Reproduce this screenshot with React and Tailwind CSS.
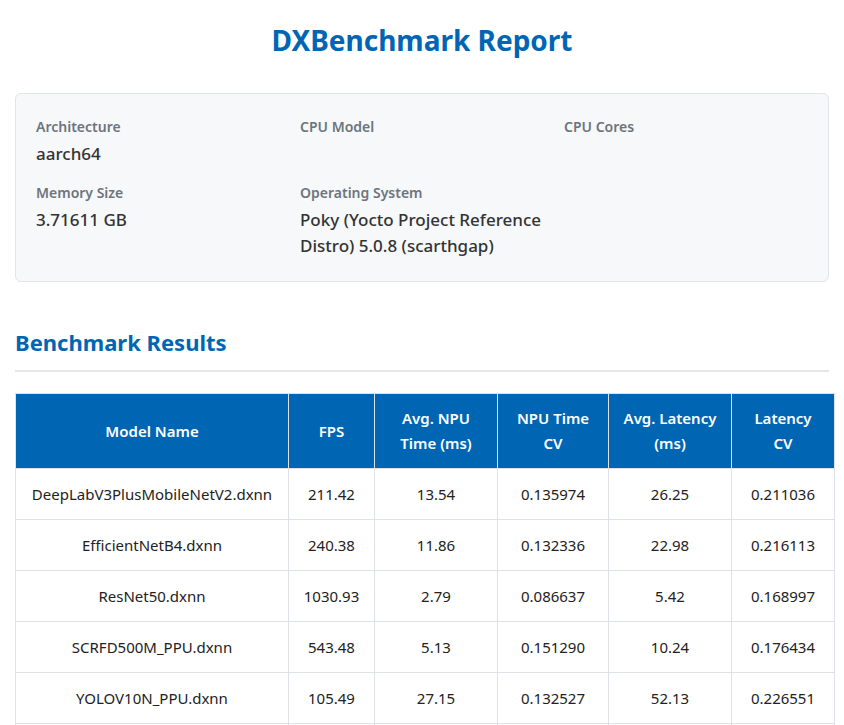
import React from 'react';

const info = [
  { label: 'Architecture', value: 'aarch64' },
  { label: 'CPU Model', value: '' },
  { label: 'CPU Cores', value: '' },
  { label: 'Memory Size', value: '3.71611 GB' },
  { label: 'Operating System', value: 'Poky (Yocto Project Reference Distro) 5.0.8 (scarthgap)' },
];

const headers = [
  ['Model Name', 'w-[273px]'],
  ['FPS', 'w-[86px]'],
  ['Avg. NPU Time (ms)', 'w-[123px]'],
  ['NPU Time CV', 'w-[111px]'],
  ['Avg. Latency (ms)', 'w-[123px]'],
  ['Latency CV', 'w-[103px]'],
];

const rows = [
  ['DeepLabV3PlusMobileNetV2.dxnn', '211.42', '13.54', '0.135974', '26.25', '0.211036'],
  ['EfficientNetB4.dxnn', '240.38', '11.86', '0.132336', '22.98', '0.216113'],
  ['ResNet50.dxnn', '1030.93', '2.79', '0.086637', '5.42', '0.168997'],
  ['SCRFD500M_PPU.dxnn', '543.48', '5.13', '0.151290', '10.24', '0.176434'],
  ['YOLOV10N_PPU.dxnn', '105.49', '27.15', '0.132527', '52.13', '0.226551'],
  ['YOLOV5S_PPU.dxnn', '310.22', '9.41', '0.128440', '18.77', '0.201376'],
];

export default function App() {
  return (
    <div className="h-screen overflow-hidden bg-white px-[15px] font-['Noto_Sans',sans-serif] text-[#333]">
      <h1 className="pt-[18px] text-center text-[28px] font-bold leading-[44px] text-[#0066b3]">DXBenchmark Report</h1>

      <div className="mt-[31px] grid grid-cols-3 gap-x-[20px] gap-y-[16px] rounded-md border border-[#e2e5e9] bg-[#f7f8fa] px-[20px] pt-[23px] pb-[22px]">
        {info.map((i) => (
          <div key={i.label}>
            <div className="text-[14px] font-semibold leading-[20px] text-[#6c757d]">{i.label}</div>
            <div className="mt-[4px] min-h-[26px] text-[17px] font-medium leading-[26px] text-[#333]">{i.value}</div>
          </div>
        ))}
      </div>

      <h2 className="mt-[44px] border-b-2 border-[#e5e7eb] pb-[12px] text-[22px] font-bold leading-[32px] text-[#0066b3]">Benchmark Results</h2>

      <table className="mt-[21px] w-full table-fixed border-collapse text-[15px]">
        <thead>
          <tr>
            {headers.map(([h, w]) => (
              <th key={h} className={`${w} h-[75px] border border-[#dee2e6] bg-[#0066b3] px-3 text-center text-[15px] font-semibold leading-[25px] text-white`}>{h}</th>
            ))}
          </tr>
        </thead>
        <tbody>
          {rows.map((r) => (
            <tr key={r[0]}>
              {r.map((c, i) => (
                <td key={i} className="h-[51px] border border-[#dee2e6] px-2 text-center text-[#222]">{c}</td>
              ))}
            </tr>
          ))}
        </tbody>
      </table>
    </div>
  );
}
